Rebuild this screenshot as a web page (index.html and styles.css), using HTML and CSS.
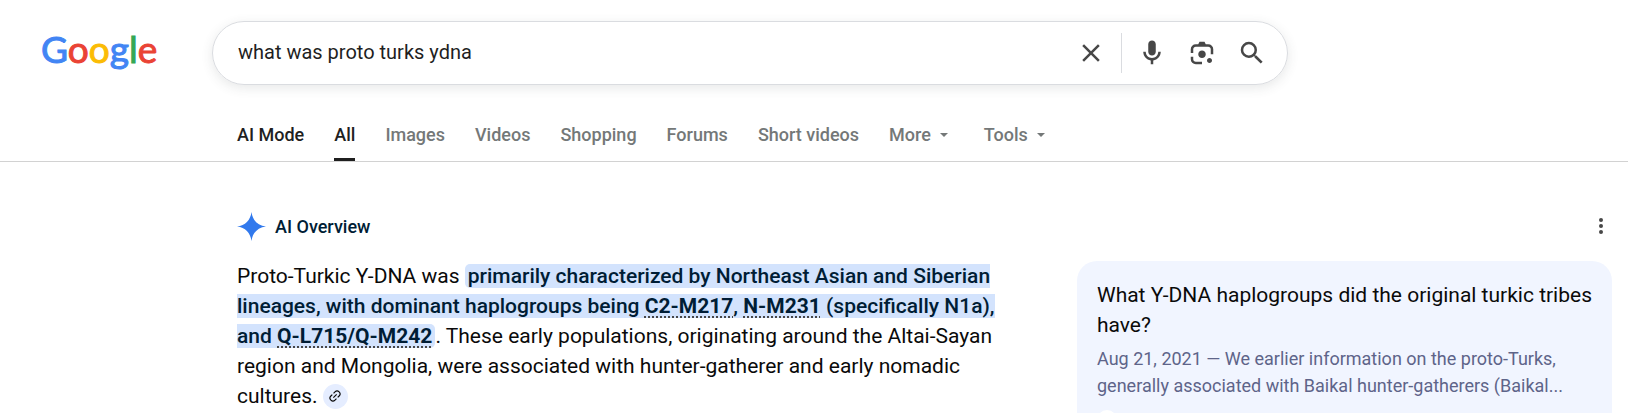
FILE: index.html
```html
<!DOCTYPE html>
<html lang="en">
<head>
<meta charset="utf-8">
<meta name="viewport" content="width=device-width, initial-scale=1">
<title>what was proto turks ydna - Google Search</title>
<link rel="stylesheet" href="styles.css">
</head>
<body>
<header class="header">
  <div class="searchrow">
    <a class="logo" href="#" aria-label="Google"><span class="blue">G</span><span class="red">o</span><span class="yellow">o</span><span class="blue">g</span><span class="green">l</span><span class="red">e</span></a>
    <form class="searchbox" role="search">
      <input class="query" type="text" aria-label="Search" value="what was proto turks ydna">
      <button class="iconbtn clear" type="button" aria-label="Clear"><svg viewBox="0 0 24 24"><path d="M19 6.41 17.59 5 12 10.59 6.41 5 5 6.41 10.59 12 5 17.59 6.41 19 12 13.41 17.59 19 19 17.59 13.41 12z"/></svg></button>
      <span class="divider"></span>
      <button class="iconbtn" type="button" aria-label="Search by voice"><svg viewBox="0 0 24 24"><path d="M12 14c1.66 0 3-1.34 3-3V5c0-1.66-1.34-3-3-3S9 3.34 9 5v6c0 1.66 1.34 3 3 3zm5-3c0 2.76-2.24 5-5 5s-5-2.24-5-5H5c0 3.53 2.61 6.43 6 6.92V21h2v-3.08c3.39-.49 6-3.39 6-6.92h-2z"/></svg></button>
      <button class="iconbtn" type="button" aria-label="Search by image"><svg viewBox="0 -960 960 960"><path d="M480-320q-50 0-85-35t-35-85q0-50 35-85t85-35q50 0 85 35t35 85q0 50-35 85t-85 35Zm240 160q-33 0-56.5-23.5T640-240q0-33 23.5-56.5T720-320q33 0 56.5 23.5T800-240q0 33-23.5 56.5T720-160Zm-440 40q-66 0-113-47t-47-113v-80h80v80q0 33 23.5 56.5T280-200h200v80H280Zm480-320v-160q0-33-23.5-56.5T680-680H280q-33 0-56.5 23.5T200-600v120h-80v-120q0-66 47-113t113-47h80l40-80h160l40 80h80q66 0 113 47t47 113v160h-80Z"/></svg></button>
      <button class="iconbtn" type="submit" aria-label="Search"><svg viewBox="0 0 24 24"><path d="M15.5 14h-.79l-.28-.27A6.47 6.47 0 0 0 16 9.5 6.5 6.5 0 1 0 9.5 16c1.61 0 3.09-.59 4.23-1.57l.27.28v.79l5 4.99L20.49 19zm-6 0a4.5 4.5 0 1 1 0-9 4.5 4.5 0 0 1 0 9z"/></svg></button>
    </form>
  </div>
  <nav class="tabs" aria-label="Search types">
    <a class="tab dark" href="#">AI Mode</a>
    <a class="tab dark active" href="#" aria-current="page">All</a>
    <a class="tab" href="#">Images</a>
    <a class="tab" href="#">Videos</a>
    <a class="tab" href="#">Shopping</a>
    <a class="tab" href="#">Forums</a>
    <a class="tab" href="#">Short videos</a>
    <button class="tab menu" type="button">More<span class="caret"></span></button>
    <button class="tab menu" type="button">Tools<span class="caret"></span></button>
  </nav>
</header>
<main class="overview">
  <div class="titlebar">
    <svg class="spark" viewBox="0 0 28 28"><path d="M14 0C15 8 20 13 28 14C20 15 15 20 14 28C13 20 8 15 0 14C8 13 13 8 14 0Z"/></svg>
    <h1 class="title">AI Overview</h1>
    <button class="dots" type="button" aria-label="More options"><svg viewBox="0 0 4 16"><circle cx="2" cy="2" r="2"/><circle cx="2" cy="8" r="2"/><circle cx="2" cy="14" r="2"/></svg></button>
  </div>
  <div class="columns">
    <p class="answer">Proto-Turkic Y-DNA was <mark class="hl">primarily characterized by Northeast Asian and Siberian<br>lineages, with dominant haplogroups being <b class="term">C2-M217</b>, <b class="term">N-M231</b> (specifically N1a),<br>and <b class="term">Q-L715/Q-M242</b></mark>. These early populations, originating around the Altai-Sayan<br>region and Mongolia, were associated with hunter-gatherer and early nomadic<br>cultures. <button class="chip" type="button" aria-label="View related links"><svg viewBox="0 0 24 24"><g transform="rotate(-45 12 12)"><path d="M10.5 7H7a5 5 0 0 0 0 10h3.5M13.5 7H17a5 5 0 0 1 0 10h-3.5M8 12h8"/></g></svg></button></p>
    <aside class="card">
      <a class="cardtitle" href="#">What Y-DNA haplogroups did the original turkic tribes have?</a>
      <p class="snippet">Aug 21, 2021 — We earlier information on the proto-Turks, generally associated with Baikal hunter-gatherers (Baikal...</p>
      <div class="source"><span class="favicon"></span></div>
    </aside>
  </div>
</main>
</body>
</html>
```
FILE: styles.css
```css
* { box-sizing: border-box; }
body {
  display: flex;
  flex-direction: column;
  height: 100vh;
  margin: 0;
  background: #fff;
  color: #0a0a0a;
  font-family: Roboto, "Liberation Sans", sans-serif;
  font-size: 20px;
}
a { color: inherit; text-decoration: none; }
button { border: 0; padding: 0; background: none; font: inherit; color: inherit; }

.header { flex: none; border-bottom: 1px solid #d2d2d2; padding-top: 21px; }
.searchrow { display: flex; align-items: center; padding-left: 41px; }
.logo {
  width: 171px;
  padding-bottom: 8px;
  font-family: Lato, sans-serif;
  font-size: 37px;
  line-height: 48px;
  -webkit-text-stroke: 1px currentColor;
}
.blue { color: #4285f4; }
.red { color: #ea4335; }
.yellow { color: #fbbc05; }
.green { color: #34a853; }
.searchbox {
  display: flex;
  align-items: center;
  flex: 0 1 1076px;
  height: 64px;
  padding: 0 20px 0 25px;
  border: 1px solid #dadce0;
  border-radius: 32px;
  box-shadow: 0 3px 12px rgba(60, 64, 67, 0.12);
}
.query {
  flex: 1;
  min-width: 0;
  padding: 0 0 2px;
  border: 0;
  outline: 0;
  background: none;
  font: inherit;
  color: #1f1f1f;
}
.iconbtn { width: 30px; height: 30px; margin-left: 20px; }
.iconbtn svg { display: block; fill: #474747; }
.clear { margin: 0 15px 0 0; }
.divider { width: 1px; height: 40px; margin-right: -5px; background: #dadce0; }

.tabs {
  display: flex;
  gap: 30px;
  padding: 26px 0 0 237px;
  font-size: 18px;
  font-weight: 500;
  color: #747878;
}
.tab { height: 50px; line-height: 48px; border-bottom: 3px solid transparent; white-space: nowrap; }
.dark { color: #1f1f1f; }
.active { border-color: #1f1f1f; }
.menu { display: flex; align-items: center; gap: 9px; margin-right: 6px; }
.caret { border: 4px solid transparent; border-top-color: currentColor; border-bottom: 0; }

.overview { flex: 1; min-height: 0; padding: 50px 16px 0 237px; overflow: hidden; }
.titlebar { display: flex; align-items: center; height: 28px; }
.spark { width: 29px; height: 29px; fill: #3179ed; }
.title { flex: 1; margin: 0 0 0 9px; font-size: 18px; font-weight: 500; color: #001d35; }
.dots { width: 22px; height: 16px; }
.dots svg { display: block; height: 16px; margin: 0 auto; fill: #474747; }
.columns { display: flex; justify-content: space-between; margin-top: 21px; }
.answer { margin: 0; font-size: 21px; line-height: 30px; white-space: nowrap; }
.hl {
  padding: 0 3px;
  border-radius: 5px;
  background: #d3e3fd;
  color: #001d35;
  font-weight: 500;
}
.term { font-weight: 700; text-decoration: underline dotted #474747 2px; text-underline-offset: 3px; }
.chip {
  display: inline-flex;
  align-items: center;
  justify-content: center;
  width: 25px;
  height: 25px;
  border-radius: 50%;
  background: #e5edff;
  vertical-align: baseline;
}
.chip svg { width: 14px; fill: none; stroke: #0a0a0a; stroke-width: 2; }
.card {
  flex: 0 0 535px;
  padding: 19px 16px 19px 20px;
  border-radius: 20px 20px 0 0;
  background: #f1f5ff;
}
.cardtitle { display: block; font-size: 21px; line-height: 30px; }
.snippet { margin: 5px 0 0; font-size: 18px; line-height: 27px; color: #5e6489; }
.source { padding: 11px 0 0; }
.favicon { display: block; width: 20px; height: 20px; border-radius: 50%; background: #fff; }
```
